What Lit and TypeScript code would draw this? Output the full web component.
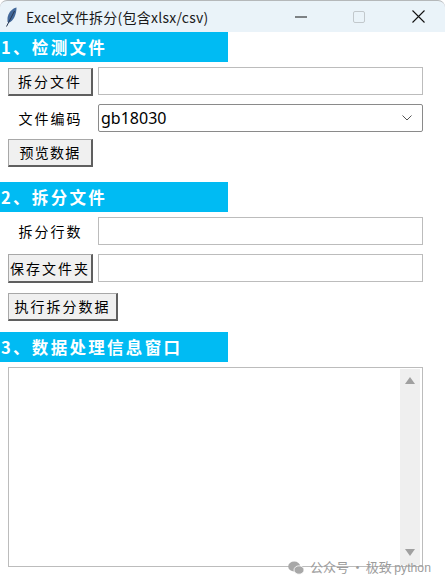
import { LitElement, html, css } from "lit";
import { customElement } from "lit/decorators.js";

@customElement("app-root")
export class AppRoot extends LitElement {
  static styles = css`
    :host {
      display: block;
      width: 445px;
      height: 586px;
      background: #fff;
      position: relative;
      overflow: hidden;
      font-family: "Noto Sans CJK SC", "Liberation Sans", sans-serif;
      color: #000;
    }
    .titlebar {
      height: 32px;
      box-sizing: border-box;
      background: #eaf3f9;
      border-top: 1px solid #b5b8ba;
      border-radius: 7px 7px 0 0;
      display: flex;
      align-items: center;
      font-size: 14px;
    }
    .feather { margin-left: 5px; width: 14px; height: 20px; flex: none; }
    .title { margin-left: 7px; color: #1a1a1a; flex: 1; white-space: nowrap; letter-spacing: 0.27px; }
    .winctl { display: flex; align-items: center; flex: none; }
    .winctl svg { display: block; }
    .ctl-min { margin-right: 46px; }
    .ctl-max { margin-right: 47px; }
    .ctl-close { margin-right: 20px; }
    .banner {
      width: 228px;
      height: 30px;
      background: #00bbf3;
      color: #fff;
      font-size: 16.5px;
      font-weight: 700;
      letter-spacing: 2.3px;
      line-height: 30px;
      padding-left: 1px;
      box-sizing: border-box;
      white-space: nowrap;
    }
    .row {
      display: flex;
      align-items: flex-start;
      padding-left: 8px;
    }
    .btn {
      box-sizing: border-box;
      height: 28px;
      width: 85px;
      background: #f0f0f0;
      border-style: solid;
      border-color: #a8a8a8 #5f5f5f #5f5f5f #a8a8a8;
      border-width: 1px 2px 2px 1px;
      font-size: 14px;
      line-height: 25px;
      text-align: center;
      white-space: nowrap;
      letter-spacing: 2px;
    }
    .btn.tight { letter-spacing: 1.2px; }
    .btn.wide { width: 110px; }
    .btn.five { height: 29px; line-height: 26px; }
    .lbl {
      box-sizing: border-box;
      width: 85px;
      height: 28px;
      line-height: 28px;
      font-size: 14px;
      letter-spacing: 2px;
      text-align: center;
      white-space: nowrap;
    }
    .input {
      box-sizing: border-box;
      margin-left: 5px;
      width: 325px;
      height: 28px;
      background: #fff;
      border: 1px solid #bcbcbc;
    }
    .combo {
      box-sizing: border-box;
      margin-left: 5px;
      width: 325px;
      height: 28px;
      background: #fff;
      border: 1px solid #8a8a8a;
      border-radius: 2px;
      display: flex;
      align-items: center;
      justify-content: space-between;
      padding: 0 10px 0 2px;
      font-family: "Noto Sans", "Liberation Sans", sans-serif;
      font-size: 16px;
    }
    .log {
      box-sizing: border-box;
      margin: 5px 0 0 8px;
      width: 415px;
      height: 200px;
      border: 1px solid #bcbcbc;
      background: #fff;
      display: flex;
      justify-content: flex-end;
      padding: 0 2px 0 0;
    }
    .scroll {
      width: 20px;
      background: #efefef;
      margin: 1px 0;
      display: flex;
      flex-direction: column;
      justify-content: space-between;
      align-items: center;
      padding: 8px 0 9px;
      box-sizing: border-box;
    }
    .scroll svg { display: block; }
    .watermark {
      position: absolute;
      left: 288px;
      top: 558px;
      display: flex;
      align-items: center;
      gap: 6px;
      color: #9c9c9c;
      font-size: 13px;
      line-height: 18px;
      white-space: nowrap;
      word-spacing: -1px;
    }
    .watermark .py { font-family: "Liberation Sans", sans-serif; font-size: 12.2px; margin-left: 2.5px; }
  `;

  render() {
    return html`
      <div class="titlebar">
        <svg class="feather" viewBox="0 0 14 20">
          <path d="M11.5 .5 C7 1.5 3 6 2.5 11 L2.5 15 L4.5 15.5 C8.5 13.5 11.5 7.5 11.5 .5Z" fill="#42689a" />
          <path d="M9.5 4 L1.5 19.5" stroke="#26364f" stroke-width="1" fill="none" />
        </svg>
        <span class="title">Excel文件拆分(包含xlsx/csv)</span>
        <div class="winctl">
          <svg class="ctl-min" width="12" height="2" viewBox="0 0 12 2"><path d="M0 1H12" stroke="#111" stroke-width="1" /></svg>
          <svg class="ctl-max" width="12" height="12" viewBox="0 0 12 12"><rect x=".5" y=".5" width="11" height="11" rx="1.5" fill="none" stroke="#c2c8cc" /></svg>
          <svg class="ctl-close" width="13" height="13" viewBox="0 0 13 13"><path d="M.5 .5L12.5 12.5M12.5 .5L.5 12.5" stroke="#111" stroke-width="1.1" /></svg>
        </div>
      </div>

      <div class="banner">1、检测文件</div>
      <div class="row" style="margin-top:5px">
        <div class="btn" style="margin-top:1px">拆分文件</div>
        <div class="input"></div>
      </div>
      <div class="row" style="margin-top:8px">
        <div class="lbl">文件编码</div>
        <div class="combo">
          <span>gb18030</span>
          <svg width="10" height="6" viewBox="0 0 10 6"><path d="M.5 .5L5 5L9.5 .5" fill="none" stroke="#555" stroke-width="1" /></svg>
        </div>
      </div>
      <div class="row" style="margin-top:7px">
        <div class="btn tight">预览数据</div>
      </div>

      <div class="banner" style="margin-top:15px">2、拆分文件</div>
      <div class="row" style="margin-top:5px">
        <div class="lbl">拆分行数</div>
        <div class="input"></div>
      </div>
      <div class="row" style="margin-top:9px">
        <div class="btn five">保存文件夹</div>
        <div class="input"></div>
      </div>
      <div class="row" style="margin-top:10px">
        <div class="btn wide">执行拆分数据</div>
      </div>

      <div class="banner" style="margin-top:11px">3、数据处理信息窗口</div>
      <div class="log">
        <div class="scroll">
          <svg width="10" height="7" viewBox="0 0 10 7"><path d="M5 0L10 7H0Z" fill="#a0a0a0" /></svg>
          <svg width="10" height="7" viewBox="0 0 10 7"><path d="M0 0H10L5 7Z" fill="#a0a0a0" /></svg>
        </div>
      </div>

      <div class="watermark">
        <svg width="16" height="14" viewBox="0 0 16 14">
          <ellipse cx="6.2" cy="5.5" rx="6" ry="5" fill="#a8a8a8" />
          <ellipse cx="11" cy="9" rx="5" ry="4.2" fill="#a8a8a8" stroke="#fff" stroke-width=".8" />
        </svg>
        <span>公众号 · 极致<span class="py">python</span></span>
      </div>
    `;
  }
}
